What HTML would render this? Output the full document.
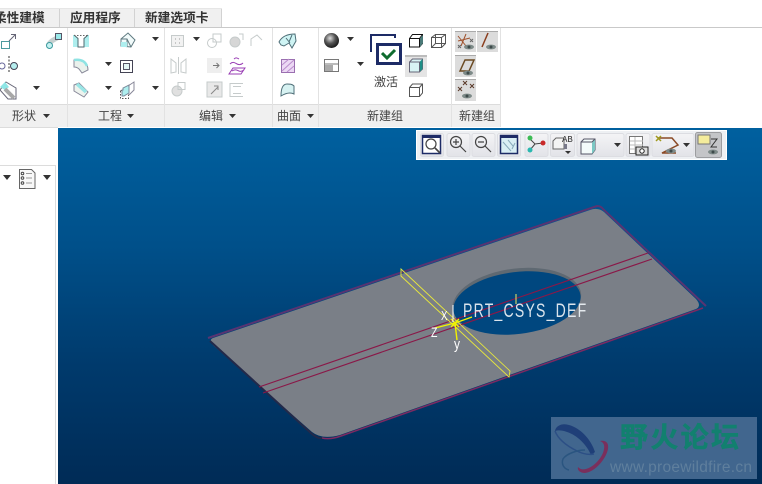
<!DOCTYPE html>
<html><head><meta charset="utf-8"><style>
html,body{margin:0;padding:0;background:#fff}
svg{display:block}
text{font-family:"Liberation Sans","Noto Sans CJK SC",sans-serif}
</style></head><body>
<svg width="762" height="484" viewBox="0 0 762 484" xmlns="http://www.w3.org/2000/svg" style="width:762px;height:484px;overflow:hidden">
<defs>
<linearGradient id="bg" x1="0" y1="0" x2="0" y2="1"><stop offset="0" stop-color="#00609f"/><stop offset=".33" stop-color="#00508a"/><stop offset=".67" stop-color="#003a6c"/><stop offset="1" stop-color="#002b56"/></linearGradient>
<radialGradient id="sph" cx=".4" cy=".35" r=".7"><stop offset="0" stop-color="#ddd"/><stop offset=".5" stop-color="#555"/><stop offset="1" stop-color="#111"/></radialGradient>
<linearGradient id="tb" x1="0" y1="0" x2="0" y2="1"><stop offset="0" stop-color="#f4f4f6"/><stop offset="1" stop-color="#e2e3e8"/></linearGradient>
<symbol id="eye" overflow="visible"><ellipse cx="0" cy="0" rx="5" ry="2.400" fill="#7d8a88"/><circle r="1.500" fill="#3d4a4a"/></symbol>
</defs>
<rect width="762" height="484" fill="#fff"/>
<!-- tabs -->
<rect x="0" y="9" width="221" height="18" fill="#f0f0f0"/>
<path d="M59.500 9V27M134.500 9V27M221.500 9V27" stroke="#d2d2d2" fill="none"/>
<path d="M0 8.500H222" stroke="#e6e6e6"/>
<path d="M0 27.500H762" stroke="#c9c9c9"/>
<g font-size="12.700" font-weight="700" fill="#333">
<text x="-6" y="22">柔性建模</text><text x="70" y="22">应用程序</text><text x="145" y="22">新建选项卡</text>
</g>
<!-- group labels -->
<rect x="0" y="105" width="500" height="22" fill="#f0f0f0"/>
<path d="M0 104.500H500M0 127.500H58" stroke="#dcdcdc"/>
<path d="M67.500 28V127M164.500 28V127M272.500 28V127M318.500 28V127M451.500 28V127M500.500 28V127" stroke="#e2e2e2" fill="none"/>
<g font-size="12" fill="#444">
<text x="12" y="120">形状</text><text x="98" y="120">工程</text><text x="199" y="120">编辑</text><text x="277" y="120">曲面</text><text x="367" y="120">新建组</text><text x="459" y="120">新建组</text><text x="374" y="86">激活</text>
</g>
<g fill="#333">
<path d="M43 114h7l-3.500 4zM127 114h7l-3.500 4zM229 114h7l-3.500 4zM307 114h7l-3.500 4z"/>
<path d="M152 37h7l-3.500 4zM193 37h7l-3.500 4zM347 37h7l-3.500 4zM152 86h7l-3.500 4zM105 62h7l-3.500 4zM105 86h7l-3.500 4zM33 86h7l-3.500 4zM357 62h7l-3.500 4z"/>
</g>
<!-- ribbon icons: shape -->
<g fill="none" stroke="#5f8285" stroke-width="1">
<rect x="1.500" y="41.500" width="8" height="7" stroke="#4d9a9e"/><path d="M9 41l6-6M11 34.500h4.500v4.500" stroke="#667"/>
<path d="M48 46c2-5 7-7 11-9" stroke="#c5cfcf" stroke-width="5"/><circle cx="49.500" cy="45.500" r="3" fill="#c5f1f1" stroke="#3a9a9e"/><rect x="55.500" y="33.500" width="6" height="6" fill="#9aeaea" stroke="#556"/>
<circle cx="2" cy="66" r="3" stroke="#669"/><circle cx="14" cy="66" r="3.500" fill="#b5eded" stroke="#445"/><path d="M9 56v16" stroke="#333" stroke-dasharray="2 1.500"/>
<path d="M0 90l6-8 10 6v11h-8z" fill="#fff" stroke="#667"/><path d="M0 87l5-5 4 5-4 3z" fill="#8fe6e6" stroke="none"/><path d="M5 89l9 9" stroke="#a8a8a8" stroke-width="4"/>
</g>
<!-- engineering -->
<g fill="none" stroke="#5f7a80">
<rect x="73" y="35" width="16" height="12" fill="#aeeeee" stroke="none"/><path d="M74 35l4 3.500v8.500h6v-8.500l4-3.500" stroke="#506a70" fill="#fff"/><path d="M74 35.500h14" stroke="#666" stroke-dasharray="1.500 1.500"/>
<path d="M121 46v-7l7-6 7 7-4 7z" fill="#f2fbfb"/><path d="M121 39h6l4 8M127 39v7" /><path d="M121 42h6v5h-6z" fill="#aeeeee" stroke="none"/>
<path d="M74 60c8-2 14 3 14 10l-6 3-3-4c-1-1-3-2-5-2z" fill="#eaf1ec" stroke="#889"/><path d="M74 60c7-1 11 1 13 6" stroke="#8fe3e3" stroke-width="2.500"/>
<rect x="120.500" y="60.500" width="12" height="12" stroke="#445"/><rect x="123.500" y="63.500" width="6" height="6" fill="#e2f4f4" stroke="#556"/>
<path d="M74 85l5-2 9 9-4 5-10-6z" fill="#eef3ee" stroke="#889"/><path d="M77 84l9 8" stroke="#9ae6e6" stroke-width="3.500"/>
<rect x="120.500" y="90.500" width="8" height="8" stroke-dasharray="1.500 1.500" stroke="#555"/><path d="M123 90v-2l6-3v8l-5 3h-2v-6z" fill="#aeeeee" stroke="#789"/><path d="M128 86l6-4v8l-5 5" stroke="#889"/>
</g>
<!-- edit (grey) -->
<g fill="none" stroke="#c6cbcb">
<rect x="171.500" y="35.500" width="12" height="11" fill="#f2f2f2"/><path d="M175 39h1M179 39h1M175 43h1M179 43h1" stroke="#999"/>
<circle cx="212" cy="43" r="4.500"/><rect x="213" y="34" width="8" height="8"/>
<circle cx="235" cy="42" r="5" fill="#d6d6d6"/><path d="M239 34h4v6"/>
<path d="M251 46v-7l6-4 5 5"/>
<path d="M171 59l5 4v9l-5 1zM186 59l-5 4v9l5 1zM178.500 57v17" />
<rect x="207" y="58" width="15" height="15" fill="#eee" stroke="none"/><path d="M213 65.500h6M216.500 63l2.500 2.500-2.500 2.500" stroke="#777"/>
<circle cx="177" cy="91" r="5" fill="#e0e0e0"/><rect x="178" y="82.500" width="7" height="7"/>
<rect x="207" y="82" width="15" height="15" fill="#e8e8e8"/><path d="M211 94l7-7M214 86h4v4" stroke="#888"/>
<path d="M243 83.500h-13v13h13M233 86.500h8M233 93.500h8"/>
</g>
<path d="M230 64c3-3 5-1 7 0s4 1 6-1M233 68h12l-4 6h-12zM232 71c3-2 5-1 7 0s3 0 5-1M234 59c2-2 3-1 5 0" fill="none" stroke="#9a3fb5"/>
<!-- surface -->
<g fill="none" stroke="#4f6f78">
<path d="M279 42c3-6 9-8 16-8l1 7-4 7-3-5-5 3-3-1z" fill="#cff4f4"/><path d="M286 38l4 5M292 35l-3 7"/>
<path d="M281 96c0-8 2-12 6-12 3 0 5 0 7 2v8c-4-2-8-1-13 2z" fill="#d7f2f2"/>
</g>
<rect x="281.500" y="59.500" width="13" height="13" fill="#ecd8f4" stroke="#9a6fb0"/>
<path d="M282 65l7-6M282 71l12-11M287 72l7-6" stroke="#b98ccc" fill="none"/>
<!-- group -->
<circle cx="331.500" cy="40.500" r="7.500" fill="url(#sph)"/>
<g fill="none" stroke="#777"><rect x="324.500" y="59.500" width="14" height="12"/><path d="M324 64h15"/></g><rect x="325" y="65" width="8" height="6" fill="#aaa"/>
<path d="M371 52V35h24v3" fill="none" stroke="#1d2b66" stroke-width="2"/>
<rect x="377.500" y="44.500" width="23" height="19" fill="#fff" stroke="#1d2b66" stroke-width="3"/>
<path d="M382 53l5 5 8-8" fill="none" stroke="#0e6b2e" stroke-width="3"/>
<rect x="405" y="56" width="22" height="21" fill="#e4e4e4"/><path d="M405 56h22" stroke="#bcbcbc" stroke-width="2"/>
<g fill="none" stroke="#111">
<path d="M409.500 38.500l3-4h10v9l-3 3.500h-10z" fill="#fff"/><path d="M409.500 38.500h10v9M419.500 38.500l3-4"/>
<path d="M420 38l3-3v8l-3 4z" fill="#4a7a78" stroke="none"/>
</g>
<g fill="none" stroke="#555">
<rect x="431.500" y="37.500" width="10" height="10"/><rect x="435.500" y="34.500" width="10" height="9"/><path d="M431.500 37.500l4-3M441.500 37.500l4-3M431.500 47.500l4-4M441.500 47.500l4-4"/>
<path d="M409.500 87.500l3-3.500h10v9l-3 3.500h-10z"/><path d="M409.500 87.500h10v9M419.500 87.500l3-3.500"/>
</g>
<path d="M409.500 62l3-3h10v10l-3 3h-10z" fill="#d8f4f4" stroke="#667"/><path d="M419.500 62l3-3v10l-3 3z" fill="#1e8f86"/><path d="M409.500 62h10v10" stroke="#667" fill="none"/>
<!-- toggles -->
<rect x="455" y="31" width="21" height="21" fill="#dcdcdc"/><rect x="477" y="31" width="21" height="21" fill="#dcdcdc"/><rect x="455" y="55" width="21" height="22" fill="#dcdcdc"/><rect x="455" y="79" width="21" height="22" fill="#dcdcdc"/>
<path d="M455 31.500h21M477 31.500h21M455 55.500h21M455 79.500h21" stroke="#aaa"/>
<g fill="none" stroke="#7a4a20">
<path d="M458 41l12-3M458 36l8 10M466 34l-5 12" stroke="#a0522d"/>
<path d="M470 39l3 3M473 39l-3 3M458 45l3 3M461 45l-3 3" stroke="#666"/>
<path d="M488 33l-6 14" stroke="#8a3d1d" stroke-width="1.500"/>
<path d="M460 71l5-11h9l-5 11z" stroke="#6b4a22" stroke-width="1.500"/>
<path d="M463 81l4 4M467 81l-4 4M458 87l4 4M462 87l-4 4M470 84l4 4M474 84l-4 4" stroke="#5a3a2a"/>
</g>
<use href="#eye" x="469" y="47"/><use href="#eye" x="491" y="47"/><use href="#eye" x="468" y="73"/><use href="#eye" x="467" y="96"/>
<!-- left panel -->
<rect x="0" y="165" width="55" height="319" fill="#fff"/>
<path d="M0 165.500H55.500V484" fill="none" stroke="#dcdcdc"/>
<path d="M3 175h8l-4 5zM43 175h8l-4 5z" fill="#333"/>
<path d="M19.500 169.500h12l3.500 3.500v15.500h-15.500z" fill="#f8f8f8" stroke="#666"/>
<g fill="none" stroke="#444"><circle cx="22.500" cy="173.500" r="1.300"/><circle cx="22.500" cy="178" r="1.300"/><circle cx="22.500" cy="183" r="1.300"/></g><path d="M26 173.500h6M26 178h6M26 183h6" stroke="#999"/>
<!-- viewport -->
<rect x="58" y="128" width="704" height="356" fill="url(#bg)"/>
<!-- sheet -->
<path d="M213 338 L590 210 Q598 207 604 212 L696 299 Q702 306 696 309 L340 435 Q322 440 312 432 L214 346 Q208 340 213 338Z" fill="#7a7f87"/>
<ellipse cx="517" cy="301" rx="64.500" ry="32.500" transform="rotate(-7 517 301)" fill="#5f6972"/>
<ellipse cx="517" cy="303" rx="64" ry="31" transform="rotate(-7 517 303)" fill="#00477f"/>
<!-- edges -->
<path d="M208 338 L597 206 Q601 206 603 209 L706 306" fill="none" stroke="#583472" stroke-width="2"/>
<path d="M703 308 L341 436 Q330 440 322 438" fill="none" stroke="#7c2a62" stroke-width="1.500"/>
<path d="M210 341 L312 434 Q318 439 322 438" fill="none" stroke="#232a4a" stroke-width="2"/>
<path d="M259 387 L648 253 M263 393 L652 259" stroke="#8a1848" stroke-width="1.100" fill="none"/>
<!-- yellow plane -->
<path d="M401 269 L510 371 L509 377 L401 276Z" fill="none" stroke="#e8e83c" stroke-width=".9"/>
<g stroke="#f2f200" stroke-width="1.400" fill="none"><path d="M455 323l-20 5M455 323l2 17M455 323l17-6"/><path d="M451 319l8 8M459 319l-8 8"/></g>
<path d="M453 305v17" stroke="#fff" stroke-width="1"/>
<path d="M516 294v10" stroke="#f0e860"/>
<g fill="#fff"><text transform="translate(441,320) scale(.75,1)" font-size="13">X</text><text transform="translate(431,337) scale(.75,1)" font-size="14">Z</text><text transform="translate(454,349) scale(.8,1)" font-size="15">y</text></g>
<text transform="translate(463,317) scale(.72,1)" font-size="19.500" fill="#eef2f6" letter-spacing="1.700" opacity=".92" style="font-family:'Liberation Sans',sans-serif;font-weight:400">PRT_CSYS_DEF</text>
<!-- toolbar -->
<rect x="416.500" y="130.500" width="310" height="29" fill="#eef0f3" stroke="#fff" />
<g fill="url(#tb)" stroke="#dcdde2">
<rect x="420.500" y="133.500" width="23" height="23" rx="2"/><rect x="447" y="133.500" width="23" height="23" rx="2"/><rect x="472" y="133.500" width="23" height="23" rx="2"/><rect x="497.500" y="133.500" width="23" height="23" rx="2"/><rect x="525" y="133.500" width="23" height="23" rx="2"/><rect x="550.500" y="133.500" width="24" height="23" rx="2"/><rect x="577" y="133.500" width="47" height="23" rx="2"/><rect x="626" y="133.500" width="24" height="23" rx="2"/><rect x="652" y="133.500" width="42" height="23" rx="2"/>
</g>
<rect x="695.500" y="132.500" width="26" height="25" rx="2" fill="#c4c5c8" stroke="#9c9da0"/>
<!-- toolbar icons -->
<rect x="422.500" y="135.500" width="18" height="18" fill="#fff" stroke="#1d2b66" stroke-width="1.500"/><path d="M422 136h19v2h-19z" fill="#1d2b66"/>
<circle cx="431" cy="144" r="5" fill="none" stroke="#444" stroke-width="1.200"/><path d="M435 148l5 5" stroke="#444" stroke-width="1.600"/>
<g fill="none" stroke="#444" stroke-width="1.200"><circle cx="456" cy="142" r="5.500"/><path d="M453 142h6M456 139v6M460 146l6 6"/><circle cx="481" cy="142" r="5.500"/><path d="M478 142h6M485 146l6 6"/></g>
<rect x="500.500" y="135.500" width="17" height="18" fill="#d8eef4" stroke="#1d2b66" stroke-width="1.500"/><path d="M500 136h18v2h-18z" fill="#1d2b66"/><path d="M503 142l8 9M508 140l5 6M512 149l3-6" stroke="#8ab" fill="none"/>
<path d="M530 139l5 5 8-1M535 144l-5 6" stroke="#444" fill="none"/><circle cx="530" cy="138" r="2.500" fill="#3dbb55"/><circle cx="543" cy="143" r="2.500" fill="#c92a2a"/><circle cx="530" cy="150" r="2.500" fill="#2ab8b0"/>
<path d="M553 141l3-3h8v11h-11z" fill="#f4f4f4" stroke="#666"/><text x="562" y="142" font-size="9" fill="#333" style="font-family:'Liberation Mono',monospace">AB</text><path d="M565 151h6l-3 3z" fill="#333"/><rect x="564" y="144" width="3" height="5" fill="#778"/>
<path d="M581 142l3-3h11v11l-3 4h-11z" fill="#f4fbfb" stroke="#556"/><path d="M592 143l3-4v11l-3 4z" fill="#7cc8c4"/><path d="M581 142h11l3-3" fill="none" stroke="#556"/>
<path d="M614 143h7l-3.500 4z M683 143h7l-3.500 4z" fill="#333"/>
<rect x="629.500" y="136.500" width="13" height="17" fill="#fff" stroke="#777"/><path d="M630 141h13M630 145h13M630 149h13M635 137v16" stroke="#bbb"/><rect x="636" y="147" width="12" height="8" fill="#ddd" stroke="#222"/><circle cx="642" cy="151" r="2.200" fill="#fff" stroke="#222"/>
<path d="M658 138l14 0 6 7-16 8 14 0" fill="none" stroke="#8a4a26" stroke-width="1.500"/><path d="M656 136l5 5M661 136l-5 5" stroke="#a09a20" stroke-width="1.500"/><use href="#eye" x="671" y="151"/>
<rect x="698" y="135" width="12" height="9" fill="#f4ec9c" stroke="#777"/><path d="M711 139h6l-6 8h6" fill="none" stroke="#333"/><use href="#eye" x="713" y="152"/>
<!-- watermark -->
<rect x="551" y="417" width="206" height="62" fill="#41668e"/>
<path d="M555 431c1-6 8-8 14-6 11 3 22 14 26 27l-4 3c-4-10-14-20-24-23-5-2-9-2-12-1z" fill="#1f3f78"/>
<path d="M555 431c3 8 12 15 22 20 6 3 12 4 17 3" fill="none" stroke="#2c4f85" stroke-width="1.500"/>
<path d="M600 441c6-1 9 2 8 8-2 10-13 23-23 24-5 0-8-3-7-6 2 2 4 3 8 2 8-2 17-12 18-20 1-4-1-7-4-8z" fill="#7a2f5c"/>
<path d="M585 450c-8 0-19 4-22 9-2 5 1 10 6 11" fill="none" stroke="#2a5580" stroke-width="1.500"/>
<g fill="#12806f" stroke="#12806f" stroke-width=".5" font-size="28" font-weight="700"><text x="620" y="447" textLength="119" lengthAdjust="spacing" style="font-family:'Noto Sans CJK SC',sans-serif">野火论坛</text></g>
<text x="610" y="472" font-size="15.500" fill="#5f7f9d" textLength="142" lengthAdjust="spacing">www.proewildfire.cn</text>
</svg>
</body></html>
